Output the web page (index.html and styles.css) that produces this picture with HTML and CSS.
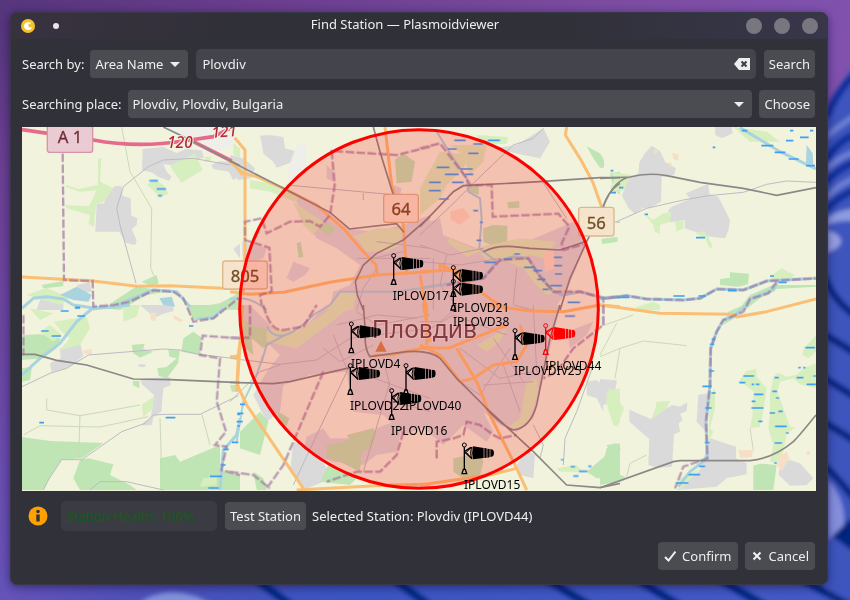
FILE: index.html
```html
<!DOCTYPE html>
<html lang="en">
<head>
<meta charset="utf-8">
<title>Find Station — Plasmoidviewer</title>
<link rel="stylesheet" href="styles.css">
</head>
<body>
<svg class="wallpaper" viewBox="0 0 850 600" preserveAspectRatio="none" aria-hidden="true">
  <defs>
    <linearGradient id="wp-base" x1="0" y1="0" x2="1" y2="0">
      <stop offset="0" stop-color="#56367c"/><stop offset=".3" stop-color="#6a3d8d"/><stop offset=".75" stop-color="#7c4da2"/><stop offset="1" stop-color="#8052ae"/>
    </linearGradient>
    <linearGradient id="wp-left" x1="0" y1="0" x2="0" y2="1">
      <stop offset="0" stop-color="#56367c"/><stop offset=".25" stop-color="#6b3f92"/><stop offset=".6" stop-color="#6c48a4"/><stop offset="1" stop-color="#6653b8"/>
    </linearGradient>
    <linearGradient id="wp-floor" x1="0" y1="0" x2="1" y2="0">
      <stop offset="0" stop-color="#6653b8"/><stop offset=".15" stop-color="#4f50b8"/><stop offset=".4" stop-color="#3b55c2"/><stop offset="1" stop-color="#4459c4"/>
    </linearGradient>
    <filter id="soft"><feGaussianBlur stdDeviation="2"/></filter>
  </defs>
  <rect width="850" height="600" fill="url(#wp-base)"/>
  <rect y="20" width="200" height="580" fill="url(#wp-left)"/>
  <rect y="570" width="850" height="30" fill="url(#wp-floor)"/>
  <g filter="url(#soft)">
    <path d="M870 50Q838 75 826 125V610H870Z" fill="#3d54bd"/>
    <g fill="none" stroke="#0b2f9b" stroke-width="7">
      <path d="M826 118Q838 88 860 70M826 160Q838 140 860 132M826 182Q838 168 860 160M826 210Q838 196 860 188"/>
    </g>
    <g fill="none" stroke="#7184d6" stroke-width="5">
      <path d="M826 137Q836 128 860 112M826 170Q836 158 860 150M826 198Q838 184 860 176"/>
    </g>
    <path d="M826 218Q842 208 860 208V222Q840 218 826 226Z" fill="#8d9be0"/>
    <path d="M826 230Q841 234 841 242Q840 248 826 253Z" fill="#96a0e3"/>
    <g fill="none" stroke="#062680" stroke-width="7">
      <path d="M824 275Q832 300 858 318M824 334L860 356M824 378L860 400M824 422L860 444M824 466Q835 474 860 506M545 578L590 606M635 578L680 606M718 578L765 606M800 578L850 606M254 578L292 606M395 580L430 606"/>
      <path d="M832 532L850 545V524Z" fill="#04206f"/>
    </g>
    <path d="M828 480Q846 500 844 525L828 540Z" fill="#8490dd"/>
    <path d="M135 606Q170 578 215 606Z" fill="#8290da"/>
  </g>
</svg>

<main class="window">
  <header class="titlebar">
    <div class="title-left">
      <svg class="app-icon" viewBox="0 0 14 14" aria-hidden="true"><circle cx="7" cy="7" r="7" fill="#f6c12c"/><path d="M5.500 3.500Q2.500 5 3 8Q4 11 7.500 11Q10.500 10.800 11 8Q9 9.300 7.500 7.500Q6.500 6 8 4.800Q9.500 4 10 5Q10.500 3.500 8.500 3.200Q6.800 3.200 5.500 3.500Z" fill="#fff"/></svg>
      <span class="pin"></span>
    </div>
    <h1 class="title">Find Station — Plasmoidviewer</h1>
    <div class="title-right">
      <button class="dot" type="button" aria-label="Minimize"></button>
      <button class="dot" type="button" aria-label="Maximize"></button>
      <button class="dot" type="button" aria-label="Close"></button>
    </div>
  </header>

  <div class="content">
    <form class="row search-row">
      <label for="search-by">Search by:</label>
      <span class="select by-select">
        <select id="search-by"><option>Area Name</option></select>
        <svg class="arrow" viewBox="0 0 10 5" aria-hidden="true"><path d="M0 0H10L5 5Z"/></svg>
      </span>
      <span class="field">
        <input id="query" type="text" value="Plovdiv" aria-label="Area name">
        <button class="clear" type="button" aria-label="Clear">
          <svg viewBox="0 0 16 12" aria-hidden="true"><path d="M5 0H16V12H5L0 6Z" fill="#eee"/><path d="M7.500 3.500L12.500 8.500M12.500 3.500L7.500 8.500" stroke="#3c3c44" stroke-width="2"/></svg>
        </button>
      </span>
      <button class="btn" type="button">Search</button>
    </form>

    <div class="row place-row">
      <label for="place">Searching place:</label>
      <span class="select place-select">
        <select id="place"><option>Plovdiv, Plovdiv, Bulgaria</option></select>
        <svg class="arrow" viewBox="0 0 10 5" aria-hidden="true"><path d="M0 0H10L5 5Z"/></svg>
      </span>
      <button class="btn" type="button">Choose</button>
    </div>

    <div class="map">
    <svg viewBox="0 0 2382 1092" preserveAspectRatio="xMidYMid slice" role="img" aria-label="Map of weather stations around Plovdiv">
      <defs>
        <g id="sock">
          <circle r="6" fill="none" stroke="currentColor" stroke-width="3"/>
          <path d="M0 6V73M-3 73H3L7 86H-7ZM0 20L20 7M0 20L20 38" fill="none" stroke="currentColor" stroke-width="4"/>
          <path d="M6 22L22 6Q15 22 22 42Z" fill="none" stroke="currentColor" stroke-width="3"/>
          <path d="M26 4L58 9V39L26 43Q16 24 26 4ZM60 9L67 10V38L60 39ZM69 11L76 12V37L69 38ZM78 12L86 14Q92 23 86 34L78 36Z" fill="currentColor"/>
          <path d="M25 10Q19 24 25 38" fill="none" stroke="#e8b48c" stroke-width="2"/>
        </g>
      </defs>
      <rect class="land" width="2382" height="1092"/>

      <!-- built-up areas -->
      <g class="town">
        <path transform="translate(-6 -6)" d="M230 238L252 235L258 212L284 184L304 182L308 212L332 220L334 272L352 280L350 300L335 312L350 345L346 360L318 354L298 320H226ZM368 72L430 66L470 84L498 72L545 76L552 98L520 104L484 122L430 118L440 140L454 154L448 168L416 156L394 142L366 136ZM574 120L600 108L640 112L660 150L640 166L626 140L580 132Z"/>
        <path class="pale" transform="translate(-6 -6)" d="M430 6H640L650 60L560 90L540 45L450 20Z"/>
        <path transform="translate(-6 -6)" d="M640 372L660 356V400ZM170 480L210 472L215 500L180 505ZM60 525L130 508V555H50Z"/>
        <path transform="translate(-6 534)" d="M120 130L180 115L190 152L158 178L140 190L95 202L90 175L122 160ZM360 0H460V18L430 26L400 40L385 22ZM360 222L450 216L452 240L430 250L424 320L400 336L396 360L366 362L372 350L392 340L402 270L366 238ZM356 178H376V186H356Z"/>
        <path transform="translate(624 -6)" d="M90 32L120 30L160 36L165 70L195 78L190 110L140 128L130 110L100 86L95 55ZM0 90L40 100L75 130L62 160L24 165L0 130Z"/>
        <path class="pale" transform="translate(624 -6)" d="M200 60L230 55V140L175 180V130Z"/>
        <path transform="translate(624 -6)" d="M190 200L260 240L350 310L430 320L520 300L600 270V555H380L300 545L310 500L360 480L390 420L320 370L260 340L210 260ZM190 410L240 430L225 450L190 470L170 460ZM36 350L110 370L100 400L70 410V450H40ZM290 120L310 140V170L290 160ZM490 180L515 190L510 210L490 205Z"/>
        <path transform="translate(624 534)" d="M30 0L60 0L140 80L200 90L290 0H600V360L520 390L460 330L370 320L350 200L240 210L160 240L150 320L110 350L70 270L110 200L150 150L90 90L40 80ZM230 395L280 370L300 400L380 400L400 420L440 370L520 340L500 440L440 450L400 480L310 470L220 440Z"/>
        <path transform="translate(624 534)" d="M190 410L250 430L290 490L280 530L220 555L180 500Z"/>
        <path transform="translate(1194 -6)" d="M0 300L60 280L70 330L170 370L320 350L460 290L500 350L440 500L400 555H0ZM220 70L290 60L370 10L390 50L360 100L310 90Z"/>
        <path transform="translate(1194 534)" d="M0 0H420L400 90L340 340L290 380L240 360L190 320L220 380L200 410L130 360L70 420L0 360ZM440 80L520 50L500 90L450 130ZM500 230L530 225L550 240L590 230L580 290L550 300V320L530 280L500 270ZM320 435L345 450L340 520L300 510L290 480Z"/>
        <path transform="translate(1734 -6)" d="M118 112L135 85L155 62L180 78L195 110L228 130L222 150L185 155L183 230L150 248L128 250L105 266L86 250L66 212L85 160L115 145ZM215 245L270 222L258 205L325 176L328 208L355 215L390 285L385 318L375 340L320 334L290 322L254 310V284L210 292L205 255ZM345 6H395L398 25L365 40L346 30Z"/>
        <path transform="translate(1734 534)" d="M88 314L155 343L168 308L200 310L218 300L240 305L262 292L260 318L240 326L248 345L236 355L240 380L222 388L216 485L170 488L145 480L148 402L88 350ZM295 270L325 264L320 330L322 385L290 350ZM0 222L50 226L45 252L18 260L0 250ZM0 270L20 280L12 298L0 290ZM330 400L408 425V460L440 475V508L380 520L350 545L230 555L300 495ZM540 475L570 465L600 475L640 520L620 540L570 542L536 510Z"/>
      </g>

      <!-- woods and parks -->
      <g class="wood">
        <path transform="translate(-6 534)" d="M6 90L60 88L122 100L110 130L70 160L6 165ZM6 396L90 408L250 414L186 460L125 464L100 500L70 555H6ZM180 465L205 460L280 478L270 510L330 540L350 555H180L160 520ZM420 460L465 450L480 470L600 420V555H420ZM490 100L520 80L545 98L538 150L484 140ZM335 120L374 116L370 132L400 140L360 158L340 145ZM412 190L440 186L470 160L448 155L445 136H480L474 175L440 220L416 212ZM340 228H358V250L338 240ZM500 0H615L580 35L520 45ZM6 190L36 185L30 225L6 230ZM630 240H660V260H635ZM600 495L660 510V555H600Z"/>
        <path transform="translate(-6 -6)" d="M65 480L130 468V484L70 490ZM365 470L410 450L416 475L395 484ZM250 550L350 484L440 500L380 510L300 555ZM510 550L600 535L655 505V555Z"/>
        <path transform="translate(624 -6)" d="M495 105L520 85L555 110L545 170L500 175ZM200 355L212 350L220 395L206 398ZM265 310L290 290L316 310L300 333Z"/>
        <path transform="translate(624 534)" d="M30 30L60 60L120 75L130 110L100 130L65 100L70 150L45 130ZM290 420L360 405L350 390L430 370L440 390L420 430L395 440L390 500L330 470L290 460ZM145 320L178 340L170 363L140 345ZM30 380L90 320L115 350L90 450L30 430ZM295 480L380 520L360 540L270 530ZM70 500L100 520L110 555H80Z"/>
        <path transform="translate(1194 -6)" d="M500 64L540 85L552 105V128H540L520 100ZM545 342L592 336V350L550 356ZM190 310L220 300L262 302V350L230 366L190 350ZM262 232L298 228V248L265 250ZM140 180H176V210L150 200ZM570 145L600 140V210L580 190Z"/>
        <path transform="translate(1194 534)" d="M500 500L570 440L560 420L600 415V520H530ZM100 460L125 455L180 440L190 470L180 510L130 520L100 500Z"/>
        <path transform="translate(1734 -6)" d="M360 462L390 458V442L447 446L444 478L414 485L360 480ZM415 555L450 510L520 480H648V485L530 492L480 520L435 555ZM5 342L52 336V350L5 356ZM0 95L14 120L0 128Z"/>
        <path transform="translate(1734 534)" d="M20 430L44 414L62 430L48 505L75 515L70 528L0 540V510ZM460 482L480 476L530 480L520 555H460ZM385 20L430 0H440L410 35L370 60Z"/>
      </g>

      <!-- meadows -->
      <g class="meadow">
        <path transform="translate(-6 -6)" d="M450 122L525 85L548 135L484 173ZM234 100H244L240 170L280 190L250 230L228 240L222 305L206 298L210 270L140 250L134 240L208 244L230 195L180 200L138 186V180L175 192L234 180ZM382 180L404 162L430 180L446 206L420 216ZM20 510L80 488L150 520L120 540ZM555 95H575L570 110H553ZM640 55L660 70V98L640 90Z"/>
        <path transform="translate(-6 534)" d="M100 50L200 35L210 70L180 120L120 135L150 100L130 85ZM60 80L90 60L125 90L100 110ZM30 10L100 25L60 45ZM310 0H360L350 35L310 50ZM365 300L400 275V310L370 335ZM550 520L590 515V540L540 545Z"/>
        <path transform="translate(624 -6)" d="M60 165L150 180L210 215L195 230L120 200L60 190ZM350 340L440 310L520 310L510 360L470 380H410L380 340ZM190 230L280 290L250 330L220 300ZM290 545L330 500L380 500L370 555H290Z"/>
        <path transform="translate(624 534)" d="M110 70L200 80L260 40L320 0H370L280 70L200 130L110 110Z"/>
        <path transform="translate(1194 -6)" d="M170 30L265 36L260 56L180 60ZM60 80L150 90L130 130L80 180L60 220L0 270V190ZM90 60L200 60L190 110L150 150L130 90ZM90 340L160 370L300 340L410 350L370 400L330 390L200 410L180 380L140 395L80 350ZM240 400L320 390L360 450L410 490L430 500L380 510L340 470L310 430Z"/>
        <path transform="translate(1194 534)" d="M320 230L350 220L355 260L330 340L300 370L260 370L300 340ZM560 260L600 250V360L590 320L560 300ZM170 120L260 70L240 110L200 140ZM410 490L470 480L490 500L420 500Z"/>
        <path transform="translate(1734 -6)" d="M30 140L60 145L95 150L70 195L40 205L30 190L45 160ZM135 268L160 285L190 265L215 262L210 290L180 300V326L165 320L160 300ZM225 290L250 285V310L230 320ZM285 325L310 318L325 335L338 365L330 370L315 340ZM510 455L545 430L585 450L560 470H515ZM400 6L500 20L540 50H450ZM110 545L160 530L180 540V555H110Z"/>
        <path transform="translate(1734 534)" d="M130 0H180V15L135 12ZM28 248L72 310L52 365L40 360L18 290ZM170 290L210 288L200 310L160 340ZM612 130L648 90V140L625 160L606 150ZM416 230L440 198L468 192L470 215L500 250L490 320L480 365L450 370L458 330V290L462 260L430 235ZM520 215L535 203L560 215L590 210L610 190L648 175V250L600 238L580 220L540 230L532 260L550 310L570 365L588 366L560 385L550 440L530 475L510 470L520 420L505 370L510 320V270ZM330 270L345 250V310L330 370L340 380L325 410ZM230 525L300 490L240 555Z"/>
      </g>
      <g class="industry">
        <path transform="translate(-6 534)" d="M190 136L215 132V148H192ZM390 25L408 22V48L392 45ZM460 30L490 45L480 52L462 42Z"/>
        <path transform="translate(1194 -6)" d="M90 260L130 248L150 275L120 300L94 285ZM370 385L400 375L405 430L375 440Z"/>
        <path transform="translate(1734 -6)" d="M160 72L175 78L165 90ZM216 84L235 88V105L222 104ZM205 112L216 115L212 128Z"/>
        <path transform="translate(1734 534)" d="M416 436L460 435L455 456L420 458ZM540 450L560 440L568 460L545 498L530 480ZM620 438H630V450H620Z"/>
      </g>

      <!-- water -->
      <g class="water">
        <path transform="translate(-6 -6)" d="M6 550L40 520L80 515L130 522L160 540L215 548L280 545L400 495L470 500L510 545"/>
        <path transform="translate(-6 534)" d="M6 210L60 160L120 115L170 50L215 12L330 0M530 42L580 38L610 10M660 340L650 390L610 435L600 555"/>
        <path class="fill" transform="translate(-6 -6)" d="M120 510L170 485L215 510L205 530L160 525ZM418 520L455 515L465 545L430 540Z"/>
        <path class="thin" transform="translate(624 534)" d="M110 65Q130 100 165 90Q200 80 250 30L300 0M100 150L80 210L40 290L20 410M165 90L110 120L95 170"/>
        <path class="thin" transform="translate(624 -6)" d="M0 522Q60 510 110 555M300 540L330 500L500 500L600 485"/>
        <path class="thin" transform="translate(1194 -6)" d="M50 20L100 100L140 160L145 200L180 220L185 280L178 370L230 410"/>
        <path transform="translate(1194 -6)" d="M0 490L190 460L230 410L280 395L325 400L350 440L400 500L430 510L480 500L560 520L600 515"/>
        <path transform="translate(1734 -6)" d="M420 8L540 80L648 132M0 522L80 512L140 522L250 525L300 520L350 492L430 495L500 468L648 460M435 550L450 522L520 495L530 475"/>
        <path transform="translate(1734 534)" d="M435 5L400 35L370 45L350 80L332 130L330 240L318 350L322 460L270 500L235 545"/>
        <path class="fill" transform="translate(1734 -6)" d="M620 60L638 85L640 120L618 115Z"/>
      </g>

      <!-- streets and minor roads -->
      <g class="minor">
        <path transform="translate(-6 -6)" d="M348 475L300 300L290 250L310 185L385 125L430 105L520 100L630 120"/>
        <path transform="translate(-6 534)" d="M6 245L90 205L140 190L205 150L430 132L480 135L535 148L655 162M70 555L85 525L125 464H186L305 380L375 355L400 330L440 328H540L655 272M210 555L240 530L320 530L430 555"/>
        <path transform="translate(624 534)" d="M0 160L150 178L260 165L360 100L600 70M0 290L90 200L150 180M360 180L260 390L190 540M310 90L350 190L600 280M280 130L330 170L430 120M480 230L400 500M380 20L440 60L600 30M320 60L440 30L560 40M460 160L490 290L600 320"/>
        <path transform="translate(624 -6)" d="M170 180L500 210M400 205V225M380 400L600 400M440 430L400 490L380 555M440 350L600 370M430 400L520 380"/>
        <path transform="translate(1194 -6)" d="M370 10L340 40L280 60L170 165L90 245L0 330M0 360L90 390L190 370M365 165L410 235L440 280M0 410L120 420L240 400M10 490V555M290 430L280 540L340 555M40 400V555M80 390L60 480L120 555M590 292H600"/>
        <path transform="translate(1194 534)" d="M0 50H60L120 0M0 90L100 30L260 90M120 130L240 220L340 200M190 240L340 230M250 180L300 320M220 100L310 230M120 230L180 270L270 130M340 0L350 200M340 360L370 420L360 460M430 480L435 400L470 320L520 180"/>
        <path transform="translate(1734 -6)" d="M45 292L140 250L250 225L325 212L430 202L500 178L560 168L648 172"/>
      </g>
      <g class="track">
        <path transform="translate(-6 -6)" d="M305 6L330 140L395 250L392 430L410 470"/>
        <path transform="translate(-6 534)" d="M80 280V315L180 332L250 320L360 300M10 390L60 362L180 365L240 366L385 335M180 330L176 450M545 325L570 420M420 340L425 500"/>
        <path transform="translate(1734 534)" d="M0 155L60 130L130 108L260 122M0 150L50 55M0 65L100 30M60 130L45 220M450 370L460 435M80 515L90 475L140 450"/>
      </g>

      <!-- main roads -->
      <g class="road">
        <path transform="translate(-6 -6)" d="M6 456L220 468L350 484L450 482L655 492M632 105L668 150"/>
        <path transform="translate(-6 534)" d="M660 110L655 150L640 158M655 155L650 260"/>
        <path transform="translate(624 -6)" d="M14 38L45 75V460L38 510M0 110L40 145L80 155L160 190L260 240L340 310L400 380L438 420L442 450M0 500L60 508L160 502L300 472L440 450L600 440M465 6L485 180L520 300L530 445"/>
        <path transform="translate(624 534)" d="M38 0L28 150L22 240L50 300L220 550M30 155H0M200 555L480 540L600 538M580 0L600 110M430 150L480 150L600 125"/>
        <path transform="translate(1194 -6)" d="M440 6L436 30L480 100L518 170L550 260M0 440L110 435L120 470L180 500L260 555M0 450L20 555M60 435V420L130 450L160 490"/>
        <path transform="translate(1194 534)" d="M0 130L90 128L260 60M0 120L60 150L120 230L160 220L220 180L290 170L320 120L300 60M110 130L170 230L210 330L290 490L320 555M20 0V120M200 0L330 18L430 20L540 0L600 5M0 540L210 510L290 490"/>
        <path transform="translate(1734 -6)" d="M0 540L180 565L395 568L410 576L500 560L648 522"/>
      </g>
      <g class="motorway">
        <path transform="translate(-6 -6)" d="M6 14L220 45Q350 70 490 48L580 35L635 8M520 50L635 108"/>
      </g>

      <!-- railways -->
      <g class="rail">
        <path transform="translate(-6 -6)" d="M430 6L500 40L660 122"/>
        <path transform="translate(-6 534)" d="M6 148H45L110 166L200 180L340 222L450 224L660 233"/>
        <path transform="translate(624 534)" d="M0 232L130 236L180 230L360 188"/>
        <path transform="translate(624 -6)" d="M0 108L160 190L300 262L358 312L500 296L522 322M430 6L450 80L490 210M600 275L520 345L440 385L400 420L376 470L382 510L400 555"/>
        <path transform="translate(1194 -6)" d="M0 305L100 200L130 182L360 170L540 158H600M600 175Q560 200 545 260L500 350L450 460L420 555M190 380Q230 360 280 365L330 370L420 375L495 350"/>
        <path transform="translate(1194 534)" d="M420 0L390 100L350 300Q330 370 280 375Q240 360 190 300L110 220L60 160Q30 135 -40 140L-150 155Q-168 130 -164 80L-170 0M200 310L340 440L440 540L540 548L600 535"/>
        <path class="thick" transform="translate(1734 -6)" d="M0 160L90 156Q140 142 200 152L300 172L430 190L530 211L648 188M10 245Q40 165 90 156"/>
        <path class="thick" transform="translate(1734 534)" d="M0 548L220 470L240 467H450Q520 460 580 410Q600 390 648 330"/>
      </g>

      <!-- administrative boundaries -->
      <g class="border">
        <path transform="translate(-6 -6)" d="M128 85L132 465L218 468L220 545L280 540L330 530L400 496L460 500L490 520L520 590L580 580L655 520"/>
        <path transform="translate(-6 534)" d="M10 30V150M660 100L548 92L540 150L600 160L590 290L618 380L585 420L620 425L604 495L660 510"/>
        <path transform="translate(624 -6)" d="M600 65L500 90L305 78L314 180L300 270L270 305L240 288L180 290L110 325L95 280L45 290V345L118 368L125 500L90 510L95 540"/>
        <path transform="translate(624 534)" d="M280 200L160 480L110 550M0 500L70 510L120 550M100 0Q120 80 160 75L220 65L260 0M520 380L500 450L450 500H380L290 530M0 98H60V0"/>
        <path transform="translate(1194 -6)" d="M0 70L60 55L140 160L150 180L215 180L218 275L415 266L448 305L425 355L430 375L490 358M80 480L190 460L240 405L325 400L360 455L400 500L480 500L550 520L600 515"/>
        <path transform="translate(1194 534)" d="M550 0V60L460 130L410 200L370 220M50 460L50 410L100 400L130 390L140 350L180 360L220 390L240 400L290 390"/>
        <path transform="translate(1734 -6)" d="M10 600V520L80 512L140 522L250 525L300 520L350 492L430 495L500 468L648 460M530 470L505 505L450 522L430 560L370 585L350 620L332 670L330 780L318 890L322 1000L250 1025L225 1090"/>
      </g>

      <!-- wetland dashes -->
      <g class="marsh">
        <path transform="translate(-6 -6)" d="M388 167H414M410 192H438M414 212H426M165 548H180"/>
        <path transform="translate(-6 534)" d="M122 18H146M165 8H180M172 33H195M64 78H86M95 93H123M58 353H72M437 338H466M507 63H520M610 433H626M570 514H606M565 549H596M602 480H617M652 328H660M652 363H660"/>
        <path transform="translate(1194 -6)" d="M103 46H137M204 46H240M160 57H188M83 72H110M145 85H175M50 127H88M120 132H158M75 148H116M136 148H160M27 172H62M96 172H130M27 197H62M57 222H86M160 257H174M180 292H188M170 346H184M283 387H300M402 397H426M252 402H276M193 412H228M312 427H340M402 422H426M340 437H366M405 447H426M352 463H376M390 482H426M368 493H386M443 532H480"/>
        <path transform="translate(1194 534)" d="M435 33H465M423 464H430M452 485H465M477 499H502M505 484H514M460 513H475"/>
        <path transform="translate(1734 -6)" d="M425 17H442M484 62H520M524 82H556M566 102H596M618 122H645M558 47H580M600 37H626M570 17H580M630 17H640M338 67H346M32 137H40M57 188H70M32 203H48M134 268H144M288 338H315M50 517H88M220 513H254M295 513H318M510 453H522M535 472H560M384 497H410"/>
        <path transform="translate(1734 534)" d="M616 128H645M430 213H462M418 233H436M455 238H462M468 238H478M524 218H536M590 218H610M595 188H602M610 188H616M640 213H648M620 238H648M462 268H490M517 259H531M455 289H466M454 309H490M528 279H537M535 319H548M509 324H525M475 349H487M525 364H560M524 414H546M558 384H566M523 474H530M335 103H345M330 118H342M328 198H342M307 244H335M334 264H347M316 309H335M315 413H328M297 484H315M265 509H300M228 534H265"/>
        <path transform="translate(624 534)" d="M30 298H45M22 325H40M20 350H38M6 412H25"/>
      </g>

      <!-- place names and road shields -->
      <path d="M1060 674L1077 641L1094 674Z" fill="#cf8a50"/>
      <g class="shield">
        <g class="pink"><rect x="76" y="-10" width="136" height="86" rx="8"/><text x="144" y="49">A 1</text></g>
        <rect x="1085" y="202" width="104" height="84" rx="8"/><text x="1137" y="265">64</text>
        <rect x="602" y="402" width="134" height="84" rx="8"/><text x="669" y="465">805</text>
        <rect x="1670" y="241" width="106" height="86" rx="8"/><text x="1723" y="306">56</text>
      </g>
      <g class="roadnum"><text x="474" y="62">120</text><text x="608" y="30" transform="rotate(-5 608 30)">121</text></g>
      <text class="city" x="1207" y="634">Пловдив</text>

      <circle class="radius" cx="1191" cy="546" r="538"/>

      <g class="stations">
        <g><use href="#sock" x="1115" y="386"/><text x="1112" y="519">IPLOVD17</text></g>
        <g><use href="#sock" x="1294" y="422"/><text x="1293" y="555">IPLOVD21</text></g>
        <g><use href="#sock" x="1294" y="463"/><text x="1293" y="596">IPLOVD38</text></g>
        <g><use href="#sock" x="988" y="591"/><text x="987" y="723">IPLOVD4</text></g>
        <g><use href="#sock" x="985" y="716"/><text x="984" y="849">IPLOVD22</text></g>
        <g><use href="#sock" x="1152" y="716"/><text x="1149" y="849">IPLOVD40</text></g>
        <g><use href="#sock" x="1109" y="791"/><text x="1107" y="924">IPLOVD16</text></g>
        <g><use href="#sock" x="1479" y="611"/><text x="1476" y="744">IPLOVDIV25</text></g>
        <g><use class="selected" href="#sock" x="1571" y="596"/><text x="1569" y="729">IPLOVD44</text></g>
        <g><use href="#sock" x="1327" y="954"/><text x="1326" y="1086">IPLOVD15</text></g>
      </g>
    </svg>
    </div>

    <div class="row status-row">
      <svg class="info" viewBox="0 0 20 20" aria-hidden="true"><circle cx="10" cy="10" r="9.500" fill="#ffa200"/><circle cx="10" cy="5.500" r="1.800" fill="#31313a"/><path d="M8.300 8.500H11.700V15.500H8.300Z" fill="#31313a"/></svg>
      <input class="health" type="text" value="Station Health: 100%" aria-label="Station health" readonly>
      <button class="btn" type="button">Test Station</button>
      <span>Selected Station: Plovdiv (IPLOVD44)</span>
    </div>

    <footer class="row footer">
      <button class="btn" type="button"><svg viewBox="0 0 12 12" aria-hidden="true"><path d="M1 7L4.500 10.500L11.500 1.500" fill="none" stroke="#f0f0f0" stroke-width="2"/></svg>Confirm</button>
      <button class="btn" type="button"><svg viewBox="0 0 12 12" aria-hidden="true"><path d="M2.500 2.500L9.500 9.500M9.500 2.500L2.500 9.500" fill="none" stroke="#f0f0f0" stroke-width="2"/></svg>Cancel</button>
    </footer>
  </div>
</main>
</body>
</html>
```
FILE: styles.css
```css
* { box-sizing: border-box; }

body {
  margin: 0;
  min-height: 100vh;
  display: flex;
  padding: 12px 22px 15px 10px;
  background: #5c4aa8;
  color: #eeeeee;
  font: 13px/18px "Noto Sans", "Liberation Sans", sans-serif;
}

.wallpaper {
  position: fixed;
  inset: 0;
  width: 100%;
  height: 100%;
  z-index: -1;
}

.window {
  flex: 1;
  min-width: 0;
  display: flex;
  flex-direction: column;
  border-radius: 7px;
  background: #31313a;
  border: 1px solid #3a3746;
  box-shadow: 0 2px 10px rgba(15, 10, 50, 0.55);
  overflow: hidden;
}

.titlebar {
  display: grid;
  grid-template-columns: 1fr auto 1fr;
  align-items: center;
  height: 26px;
  padding: 0 9px;
  background: linear-gradient(90deg, #38323f, #303038 30%, #303038 65%, #38364a);
}

.title {
  align-self: start;
  margin: 0 28px 0 0;
  font-size: 13px;
  font-weight: 400;
  line-height: 22px;
}

.title-left,
.title-right {
  display: flex;
  align-items: center;
}

.title-left { gap: 18px; padding-left: 1px; }
.title-right { gap: 12px; justify-content: flex-end; }
.app-icon { width: 14px; height: 14px; }

.pin {
  width: 6px;
  height: 6px;
  border-radius: 50%;
  background: #e8e6e8;
}

.dot {
  width: 16px;
  height: 16px;
  padding: 0;
  border: 0;
  border-radius: 50%;
  background: #78767f;
}

.content {
  flex: 1;
  display: flex;
  flex-direction: column;
  padding: 10px 11px 14px;
}

.row {
  display: flex;
  align-items: center;
  gap: 7px;
  padding-right: 1px;
}

.search-row { margin-bottom: 11px; }
.place-row { margin-bottom: 9px; }
.place-row label { margin-right: -1px; }
.search-row label { margin-right: -1px; }

button,
input,
select {
  font: inherit;
  color: inherit;
}

.btn {
  display: flex;
  align-items: center;
  gap: 6px;
  height: 28px;
  padding: 0 5px;
  border: 0;
  border-radius: 4px;
  background: #4b4c52;
  white-space: nowrap;
}

.select {
  position: relative;
  display: block;
}

.select select {
  appearance: none;
  width: 100%;
  height: 28px;
  padding: 0 24px 0 5px;
  border: 0;
  border-radius: 4px;
  background: #4b4c52;
}

.by-select { width: 98px; }
.place-select { flex: 1; }

.arrow {
  position: absolute;
  right: 8px;
  top: 12px;
  width: 10px;
  height: 5px;
  fill: #eeeeee;
  pointer-events: none;
}

.field {
  flex: 1;
  display: flex;
  align-items: center;
  height: 30px;
  margin: 0 1px;
  padding: 0 6px;
  border-radius: 5px;
  background: #44444d;
}

.field input {
  flex: 1;
  min-width: 0;
  padding: 0;
  border: 0;
  outline: 0;
  background: none;
}

.clear {
  display: flex;
  padding: 0;
  border: 0;
  background: none;
}

.clear svg { width: 16px; height: 12px; }

.map {
  flex: 1 1 364px;
  min-height: 200px;
  display: grid;
  overflow: hidden;
}

.map svg {
  width: 100%;
  height: 100%;
  min-height: 0;
}

.status-row { margin: 10px 0 11px; gap: 6px; }

.info {
  width: 20px;
  height: 20px;
  margin: 0 7px 0 6px;
}

.health {
  width: 156px;
  height: 30px;
  margin-right: 2px;
  padding: 0 6px;
  border: 0;
  border-radius: 5px;
  background: #3b3b43;
  color: #175c1b;
}

.footer { justify-content: flex-end; }
.footer .btn { padding: 0 6px; }
.footer svg { width: 12px; height: 12px; }

/* Map layers */
.land { fill: #f1f3dc; }
.town { fill: #dadada; }
.town .pale { fill: #efefe9; }
.wood { fill: #bfe5b5; }
.meadow { fill: #d7eebf; }
.industry { fill: #f7dec7; }

.water { fill: none; stroke: #a9d3de; stroke-width: 9; stroke-linejoin: round; }
.water .thin { stroke-width: 6; }
.water .fill { fill: #a9d3de; stroke: none; }
.minor { fill: none; stroke: #bcbcc2; stroke-width: 3; }
.track { fill: none; stroke: #ccd9b8; stroke-width: 3; }
.road { fill: none; stroke: #fabf74; stroke-width: 9; stroke-linejoin: round; }
.motorway { fill: none; stroke: #e66a8b; stroke-width: 11; }
.rail { fill: none; stroke: #8c8888; stroke-width: 5; }
.rail .thick { stroke-width: 5; }
.border { fill: none; stroke: #9a6b9c; stroke-width: 7; stroke-dasharray: 26 7; opacity: 0.65; }
.marsh { fill: none; stroke: #3f9ff2; stroke-width: 5; }

.map text { font-family: "Noto Sans", "Liberation Sans", sans-serif; }
.shield rect { fill: #f6e3cc; stroke: #dcb78e; stroke-width: 4; }
.shield text { fill: #705028; stroke: #705028; stroke-width: 1; font-size: 50px; text-anchor: middle; }
.shield .pink rect { fill: #eacbd3; stroke: #d795a8; }
.shield .pink text { fill: #6d2445; }
.roadnum { fill: #b5243c; stroke: #f1f3dc; stroke-width: 6; paint-order: stroke; font-size: 46px; font-style: italic; font-weight: 500; text-anchor: middle; }
.city { fill: #5f4a50; stroke: rgba(240, 235, 235, 0.6); stroke-width: 6; paint-order: stroke; font-size: 74px; font-weight: 400; text-anchor: middle; }
.radius { fill: rgba(255, 0, 0, 0.2); stroke: #ff0000; stroke-width: 9; }
.stations { color: #000000; fill: #000000; font-size: 36px; }
.selected { color: #ff0000; }
```
